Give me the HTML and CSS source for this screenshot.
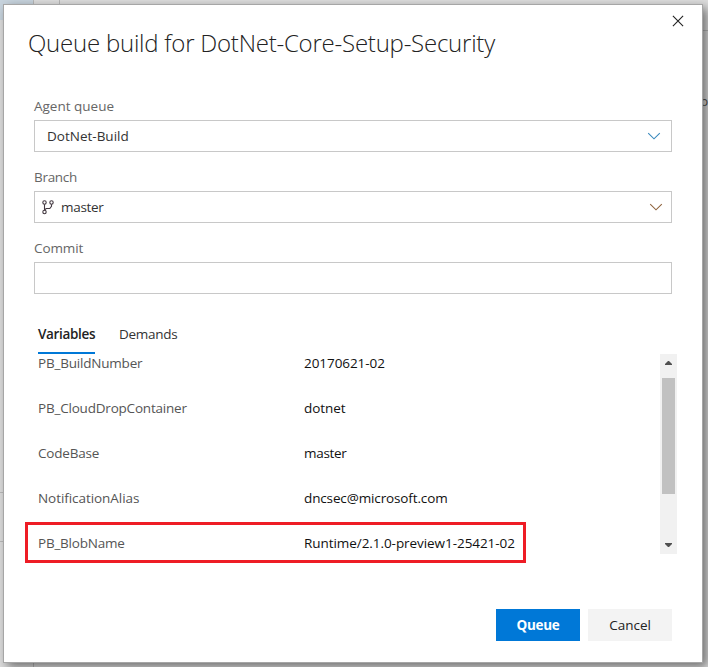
FILE: index.html
```html
<!DOCTYPE html>
<html lang="en">
<head>
<meta charset="utf-8">
<title>Queue build</title>
<link rel="stylesheet" href="styles.css">
</head>
<body>
<div class="backdrop">
  <i class="corner"></i><i class="vline"></i><i class="hline one"></i><i class="hline two"></i><i class="hline right"></i><span class="behind">p</span>
</div>
<main class="dialog">
  <header class="header">
    <h1 class="title">Queue build for DotNet-Core-Setup-Security</h1>
    <svg class="close" width="12" height="12" viewBox="0 0 12 12"><path d="M.9.9 11.1 11.1M11.1.9.9 11.1"/></svg>
  </header>
  <section class="form">
    <div class="label agent">Agent queue</div>
    <div class="field"><span class="value build">DotNet-Build</span><svg class="chevron blue" width="14" height="8" viewBox="0 0 14 8"><path d="m1.2 1.2 5.8 5.6 5.8-5.6"/></svg></div>
    <div class="label branch">Branch</div>
    <div class="field"><svg class="fork" width="12" height="15" viewBox="0 0 12 15"><circle cx="2.5" cy="2.5" r="1.7"/><circle cx="9.5" cy="2.5" r="1.7"/><circle cx="2.5" cy="12" r="1.7"/><path d="M2.5 4.2v6.1M9.5 4.2v2.1L7.8 8.5H4.2L2.5 10.2"/></svg><span class="value master">master</span><svg class="chevron brown" width="14" height="8" viewBox="0 0 14 8"><path d="m1.2 1.2 5.8 5.6 5.8-5.6"/></svg></div>
    <div class="label commit">Commit</div>
    <div class="field"></div>
  </section>
  <nav class="tabs"><span class="tab active">Variables</span><span class="tab demands">Demands</span></nav>
  <section class="variables">
    <div class="rows">
      <div class="row"><span class="name n1">PB_BuildNumber</span><span class="data d1">20170621-02</span></div>
      <div class="row"><span class="name n2">PB_CloudDropContainer</span><span class="data d2">dotnet</span></div>
      <div class="row"><span class="name n3">CodeBase</span><span class="data d3">master</span></div>
      <div class="row"><span class="name n4">NotificationAlias</span><span class="data d4">dncsec@microsoft.com</span></div>
      <div class="row marked"><span class="name n5">PB_BlobName</span><span class="data d5">Runtime/2.1.0-preview1-25421-02</span></div>
    </div>
    <div class="scrollbar">
      <svg width="7" height="4" viewBox="0 0 7 4"><path d="M0 4V3L3 0h1l3 3v1z"/></svg>
      <div class="thumb"></div>
      <svg width="7" height="4" viewBox="0 0 7 4"><path d="M0 0v1l3 3h1l3-3V0z"/></svg>
    </div>
  </section>
  <footer class="footer"><button class="button primary">Queue</button><button class="button">Cancel</button></footer>
</main>
</body>
</html>
```
FILE: styles.css
```css
* { box-sizing: border-box; }
body { margin: 0; width: 708px; height: 667px; overflow: hidden; background: #dedede; font: 13.5px/20px "Open Sans", sans-serif; color: #333; }
.backdrop { position: absolute; inset: 0; overflow: hidden; }
.backdrop i, .behind { position: absolute; }
.corner { left: 0; top: 0; width: 34px; height: 20px; background: #c8d4de; border-right: 1px solid #b8b8b8; }
.vline { left: 33px; top: 0; width: 27px; height: 667px; border-left: 1px solid #b8b8b8; }
.vline::after { content: ""; position: absolute; left: 25px; top: 0; width: 1px; height: 20px; background: #b8b8b8; }
.hline { left: 0; width: 4px; height: 1px; background: #bbb; }
.one { top: 492px; }
.two { top: 541px; }
.hline.right { left: 702px; width: 6px; top: 30px; }
.behind { left: 700px; top: 91px; color: #555; }
.dialog { position: relative; display: flex; flex-direction: column; width: 700px; height: 659px; margin: 4px 0 0 3px; background: #fff; border: 1px solid #a6a6a6; box-shadow: 4px 4px 10px rgba(0, 0, 0, .5); }
.header { display: flex; justify-content: space-between; height: 91px; padding: 10px 18px 0 24px; }
.title { margin: 8px 0 0; font-size: 24px; line-height: 40px; font-weight: 300; color: #222; white-space: nowrap; letter-spacing: -.23px; }
.close { fill: none; stroke: #222; stroke-width: 1.1; }
.form { padding: 0 30px; }
.label { height: 24px; line-height: 20px; color: #666; }
.branch { letter-spacing: -.3px; }
.commit { letter-spacing: -.1px; }
.field { display: flex; align-items: center; height: 32px; margin-bottom: 15px; border: 1px solid #c8c8c8; }
.form .value { margin-left: 12px; }
.form .master { margin-left: 7px; letter-spacing: -.3px; }
.chevron { margin-left: auto; margin-right: 10px; fill: none; stroke-width: 1.1; }
.blue { stroke: #3989bd; }
.brown { stroke: #8f643f; margin-right: 8px; }
.fork { margin-left: 7px; fill: none; stroke: #443a42; stroke-width: 1.1; }
.tabs { display: flex; gap: 24px; height: 30px; margin: 15px 34px 0; }
.tab { height: 30px; line-height: 20px; }
.tab.active { width: 57px; font-weight: 600; color: #222; border-bottom: 2px solid #0078d7; white-space: nowrap; letter-spacing: -.33px; }
.demands { letter-spacing: -.27px; }
.variables { display: flex; height: 200px; padding-left: 21px; }
.rows { width: 635px; }
.row { display: flex; align-items: center; height: 45px; padding-left: 13px; }
.row:first-child { height: 33px; padding-bottom: 15px; }
.row:nth-child(2) { height: 43px; padding-bottom: 1px; }
.name { width: 266px; color: #555; letter-spacing: -.2px; }
.n4 { letter-spacing: -.06px; }
.n5 { letter-spacing: -.22px; }
.data { color: #111; white-space: nowrap; letter-spacing: -.06px; }
.d3 { letter-spacing: -.3px; }
.d4 { letter-spacing: -.13px; }
.row.marked { width: 501px; height: 41px; margin-top: 2px; padding-left: 10px; border: 3px solid #ee1c25; }
.scrollbar { display: flex; flex-direction: column; align-items: center; width: 17px; height: 200px; padding: 7px 0; background: #f1f1f1; }
.scrollbar svg { fill: #505050; flex: none; }
.thumb { width: 13px; height: 116px; margin: 13px 0 auto; background: #c1c1c1; }
.footer { display: flex; justify-content: flex-end; gap: 8px; margin-top: 55px; padding-right: 30px; }
.button { width: 84px; height: 32px; padding: 0; border: 0; background: #f3f3f3; color: #222; font: 13.5px/30px "Open Sans", sans-serif; }
.primary { background: #0078d7; color: #fff; font-weight: 700; letter-spacing: -.3px; }
```
